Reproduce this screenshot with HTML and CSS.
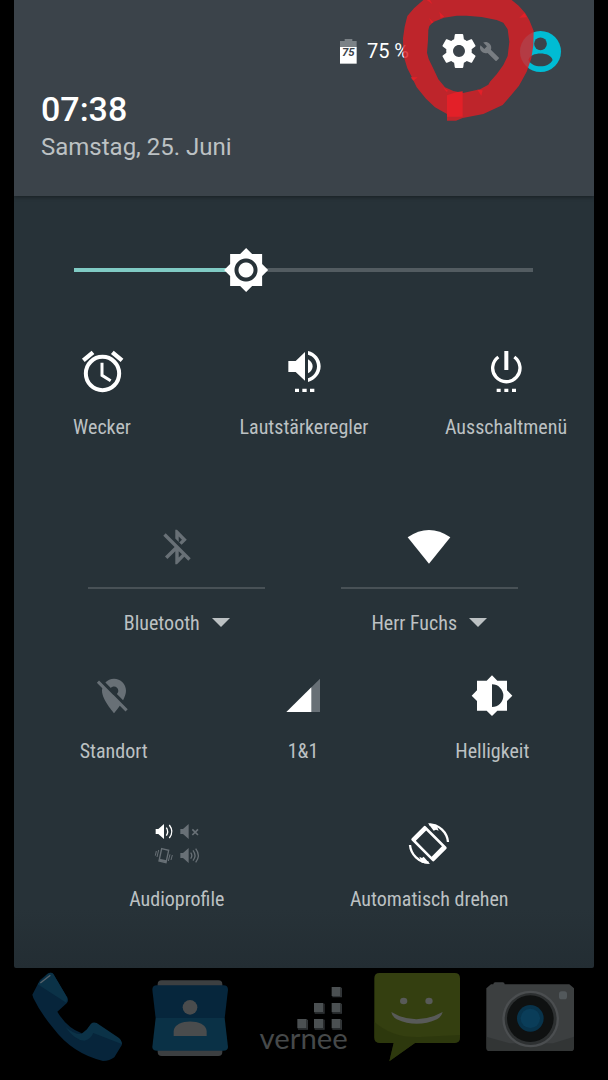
FILE: index.html
```html
<!DOCTYPE html>
<html lang="de">
<head>
<meta charset="utf-8">
<meta name="viewport" content="width=device-width, initial-scale=1">
<title>Schnelleinstellungen</title>
<link rel="stylesheet" href="styles.css">
</head>
<body>
<main class="panel">
  <header class="header">
    <div class="status">
      <svg class="battery" viewBox="60 114 51 75" aria-hidden="true">
        <path fill="#7b8287" d="M74 114h23v6h13v19H60v-19h14z"/>
        <path fill="#fff" d="M60 138h50v50H60z"/>
        <text class="battery-level" x="85" y="164" text-anchor="middle">75</text>
      </svg>
      <span class="percent">75 %</span>
      <button class="icon-button gear" type="button" aria-label="Einstellungen">
        <svg viewBox="2 2 20 20" fill="#fff"><path d="M19.43 12.98c.04-.32.07-.64.07-.98s-.03-.66-.07-.98l2.11-1.65c.19-.15.24-.42.12-.64l-2-3.46c-.12-.22-.39-.3-.61-.22l-2.49 1c-.52-.4-1.08-.73-1.69-.98l-.38-2.65C14.46 2.18 14.25 2 14 2h-4c-.25 0-.46.18-.49.42l-.38 2.65c-.61.25-1.17.59-1.69.98l-2.49-1c-.23-.09-.49 0-.61.22l-2 3.46c-.13.22-.07.49.12.64l2.11 1.65c-.04.32-.07.65-.07.98s.03.66.07.98l-2.11 1.65c-.19.15-.24.42-.12.64l2 3.46c.12.22.39.3.61.22l2.49-1c.52.4 1.08.73 1.69.98l.38 2.65c.03.24.24.42.49.42h4c.25 0 .46-.18.49-.42l.38-2.65c.61-.25 1.17-.59 1.69-.98l2.49 1c.23.09.49 0 .61-.22l2-3.46c.12-.22.07-.49-.12-.64l-2.11-1.65zM12 15.5c-1.93 0-3.5-1.57-3.5-3.5s1.57-3.5 3.5-3.5 3.5 1.57 3.5 3.5-1.57 3.5-3.5 3.5z"/></svg>
      </button>
      <svg class="wrench" viewBox="1 1 22 22" fill="#787d82" aria-hidden="true"><path d="M22.7 19l-9.1-9.1c.9-2.3.4-5-1.5-6.9-2-2-5-2.4-7.4-1.3L9 6 6 9 1.6 4.7C.4 7.1.9 10.1 2.9 12.1c1.9 1.9 4.6 2.4 6.9 1.5l9.1 9.1c.4.4 1 .4 1.4 0l2.3-2.3c.5-.4.5-1.1.1-1.4z"/></svg>
      <button class="icon-button user" type="button" aria-label="Nutzer">
        <svg viewBox="600 90 122 122"><circle cx="661" cy="151" r="61" fill="#00bcd4"/><circle cx="661" cy="128" r="19" fill="#3b434a"/><path fill="#3b434a" d="M625 176c4-13 19-19 36-19s32 6 36 19c-6 12-20 19-36 19s-30-7-36-19z"/></svg>
      </button>
    </div>
    <div class="time">07:38</div>
    <div class="date">Samstag, 25. Juni</div>
    <svg class="marker" viewBox="240 0 411 366" aria-hidden="true">
      <path fill="#dc1e25" fill-opacity=".82" fill-rule="evenodd" d="M310 0 282 25 262 48 254 80 249 115 250 165 262 205 275 230 290 262 318 296 345 322 381 342V362H408L428 354 490 342 548 315 572 287 597 257 620 215 634 175 640 135 641 93 628 61 616 40 596 17 575 0ZM325 90 328 78 340 66 372 53 410 47 440 47 485 51 530 60 550 68 563 88 568 125 563 168 550 195 530 223 510 245 505 254 480 268 456 273 429 279 400 273 375 262 355 238 342 210 326 177 321 158 324 120Z"/>
      <path fill="#e32028" d="M381 286 408 277 428 274V350H381ZM320 0h10l7 12zM358 36l15 14-11 4zM327 54l14 13-7 3zM598 53l15-14 8 13zM272 232l21 0-13 10zM369 262l16 11-6 2zM472 269l16 2-4 16z"/>
    </svg>
  </header>

  <input class="slider" type="range" min="0" max="1000" value="375" aria-label="Displayhelligkeit">

  <div class="actions">
    <button class="tile" type="button">
      <svg class="icon" viewBox="54 54 144 144" fill="none" stroke="#fff"><circle cx="127.500" cy="130.500" r="50" stroke-width="12"/><path stroke-width="9" d="M126 98v38l26 16"/><path stroke-width="13" d="M70 91l29-24M157 67l29 24"/></svg>
      <span class="label">Wecker</span>
    </button>
    <button class="tile" type="button">
      <svg class="icon" viewBox="660 54 144 144" fill="#fff"><path d="M685 93h22l28-27v86l-28-26h-22zM744 88c9 5 14 13 14 21s-5 17-14 21zM744 63c22 5 38 24 38 46s-16 41-38 47v-11c16-5 27-19 27-36s-11-31-27-35zM705 176h12v10h-12zM727 176h13v10h-13zM750 176h13v10h-13z"/></svg>
      <span class="label">Lautstärkeregler</span>
    </button>
    <button class="tile" type="button">
      <svg class="icon" viewBox="486 54 144 144"><path fill="none" stroke="#fff" stroke-width="10" d="M535 81a41 41 0 1 0 48 0"/><path fill="#fff" d="M553 63h12v57h-12zM530 176h12v10h-12zM553 176h12v10h-12zM576 176h12v10h-12z"/></svg>
      <span class="label">Ausschaltmenü</span>
    </button>
  </div>

  <div class="tiles">
    <div class="row row-dual">
      <div class="dual">
        <button class="dual-icon" type="button" aria-label="Bluetooth umschalten">
          <svg class="icon" viewBox="-2 -2 28 28" fill="#687076"><path d="M13 5.830l1.880 1.880-1.600 1.600 1.410 1.410 3.020-3.020L12 2h-1v5.030l2 2v-3.200zM5.410 4L4 5.410 10.590 12 5 17.590 6.410 19 11 14.410V22h1l4.290-4.290 2.300 2.290L20 18.590 5.410 4zM13 18.170v-3.760l1.880 1.880L13 18.170z"/></svg>
        </button>
        <button class="dual-label" type="button">Bluetooth<svg class="caret" viewBox="0 0 18 10"><path fill="#bcc1c3" d="M0 0h18L9 9z"/></svg></button>
      </div>
      <div class="dual">
        <button class="dual-icon" type="button" aria-label="WLAN umschalten">
          <svg class="icon" viewBox="255 69 144 144" fill="#fff"><path d="M327 191 263 112Q327 68 391 112Z"/></svg>
        </button>
        <button class="dual-label" type="button">Herr Fuchs<svg class="caret" viewBox="0 0 18 10"><path fill="#bcc1c3" d="M0 0h18L9 9z"/></svg></button>
      </div>
    </div>
    <div class="row row-three">
      <button class="tile" type="button">
        <svg class="icon" viewBox="-2 -2 28 28" fill="#687076"><path d="M12 6.500c1.380 0 2.500 1.120 2.500 2.500 0 .740-.330 1.390-.830 1.850l3.630 3.630c.980-1.860 1.700-3.800 1.700-5.480 0-3.870-3.130-7-7-7-1.980 0-3.760.830-5.040 2.150l3.190 3.190c.460-.520 1.110-.840 1.850-.840zm4.370 9.600l-4.630-4.630-.110-.110L3.270 3 2 4.270l3.180 3.180C5.070 7.950 5 8.470 5 9c0 5.250 7 13 7 13s1.670-1.850 3.380-4.350L18.730 21 20 19.730l-3.630-3.630z"/></svg>
        <span class="label">Standort</span>
      </button>
      <button class="tile" type="button">
        <svg class="icon" viewBox="655 36 144 144"><path fill="#687076" d="M778 56v100h-28V84z"/><path fill="#fff" d="M677 156h75V82z"/></svg>
        <span class="label">1&amp;1</span>
      </button>
      <button class="tile" type="button">
        <svg class="icon" viewBox="204 36 144 144" fill="#fff"><path fill-rule="evenodd" d="M276 46l16 16h29v29l16 16-16 16v29h-29l-16 16-16-16h-29v-29l-16-16 16-16V62h29zM276 73v68a34 34 0 0 0 0-68z"/></svg>
        <span class="label">Helligkeit</span>
      </button>
    </div>
    <div class="row row-two">
      <button class="tile" type="button">
        <svg class="icon" viewBox="128 60 144 144" fill="none">
          <g stroke-width="4" stroke="#fff"><path fill="#fff" stroke="none" d="M136 87h8l17-15v45l-17-15h-8z"/><path d="M168 83q8 12 0 24M177 75q15 20 0 39"/></g>
          <g stroke="#687076" stroke-width="4"><path fill="#687076" stroke="none" d="M210 87h8l17-15v45l-17-15h-8zM210 159h8l17-15v45l-17-15h-8z"/><path d="M246 88l17 17M263 88l-17 17" stroke-width="5"/><path d="M241 158q7 9 0 18M248 151q12 16 0 31M256 146q16 21 0 41"/><path d="M154 146l21 5-8 37-21-5z"/><path d="M147 179l21 5" stroke-width="6"/><path d="M145 150l-5 21M138 153l-3 14M179 163l-5 20M186 165l-4 15" stroke-width="3"/></g>
        </svg>
        <span class="label">Audioprofile</span>
      </button>
      <button class="tile" type="button">
        <svg class="icon" viewBox="885 60 144 144"><g transform="rotate(45 957 131)"><path fill="#fff" fill-rule="evenodd" d="M914 101h86q5 0 5 5v50q0 5-5 5h-86q-5 0-5-5v-50q0-5 5-5zM923 109v44h67v-44z"/></g><path fill="none" stroke="#fff" stroke-width="7" d="M958 73a58 58 0 0 1 56 53M956 188a58 58 0 0 1-56-53"/><path fill="#fff" d="M954 70l25 4 7 18-8-3-7 3zM960 192l-25-4-7-18 8 4 5-4z"/></svg>
        <span class="label">Automatisch drehen</span>
      </button>
    </div>
  </div>
</main>

<nav class="dock" aria-label="Favoriten">
  <a class="app" href="#telefon" aria-label="Telefon">
    <svg viewBox="96 66 270 270"><path fill="#07253b" d="M97 134 120 90 142 72q11-7 18 0l42 71q5 9-2 17l-28 25q28 48 73 65 12-2 18-14l9-12q7-7 18-3l67 45q12 9 8 20l-22 36q-14 11-34 11-92-22-149-98-39-47-60-91z"/><path fill="#0b3247" d="M113 103 142 72q11-7 18 0l42 71-3 15zM261 238l12-17q7-6 17-2l67 45q10 8 8 18l-85-33q-9 20-27 23-29-2-57-42 27 24 48 22z"/><path stroke="#5a646b" stroke-width="4" d="M121 99l30-23"/></svg>
  </a>
  <a class="app" href="#kontakte" aria-label="Kontakte">
    <svg viewBox="436 66 270 270"><rect x="474" y="91" width="194" height="227" rx="12" fill="#3c3f41"/><path fill="#06263c" d="M472 106h199q14 0 14 13l-10 86H468l-10-86q0-13 14-13z"/><path fill="#0a3146" d="M468 204h207l10 87q0 11-14 11H472q-14 0-14-11z"/><circle cx="571" cy="172" r="22" fill="#4a4c4d"/><path fill="#4a4c4d" d="M522 258v-15c3-38 96-38 99 0v15z"/></svg>
  </a>
  <a class="app" href="#vernee" aria-label="vernee">
    <svg viewBox="777 66 270 270"><path fill="#4b5052" d="M995 111h27v27h-27zM942 159h28v28h-28zM995 159h27v28h-27zM892 207h28v28h-28zM942 207h28v28h-28zM995 207h27v28h-27z"/><path fill="none" stroke="#303437" stroke-width="4" d="M997 140h27v-27M944 189h28v-28M997 189h27v-28M894 237h28v-28M944 237h28v-28M997 237h27v-28"/><text class="brand" x="911" y="298" text-anchor="middle">vernee</text></svg>
  </a>
  <a class="app" href="#nachrichten" aria-label="Nachrichten">
    <svg viewBox="206 66 270 270"><path fill="#343f10" d="M226 69h225q16 0 16 16v177q0 17-16 17H332l-77 55 13-55h-42q-16 0-16-17V85q0-16 16-16z"/><path fill="#29330b" d="M210 215q58 53 150 45l107-5v7q0 17-16 17H332l-77 55 13-55h-42q-16 0-16-17z" opacity=".6"/><ellipse cx="298" cy="153" rx="11" ry="10" fill="#585a58"/><ellipse cx="374" cy="153" rx="11" ry="10" fill="#585a58"/><path fill="#585a58" d="M261 186q73 44 154 0-3 14-17 22-61 27-121 0-14-8-16-22z"/></svg>
  </a>
  <a class="app" href="#kamera" aria-label="Kamera">
    <svg viewBox="545 66 270 270"><rect x="567" y="97" width="34" height="14" rx="6" fill="#3d4042"/><path fill="#3c3f40" d="M560 103h235l14 12v178q0 10-10 10H556q-10 0-10-10V115z"/><path fill="#2c2e2f" d="M546 260l70 20h130l63-20v33q0 10-10 10H556q-10 0-10-10z" opacity=".6"/><circle cx="679" cy="207" r="85" fill="#4b4e50"/><circle cx="679" cy="207" r="78" fill="#2d3031"/><circle cx="678" cy="206" r="70" fill="#0f1111"/><circle cx="678" cy="205" r="40" fill="#08334b"/><circle cx="678" cy="205" r="29" fill="#0a3d59"/><rect x="764" y="124" width="24" height="24" rx="8" fill="#52585b"/></svg>
  </a>
</nav>
</body>
</html>
```
FILE: styles.css
```css
* {
  box-sizing: border-box;
}

body {
  margin: 0;
  min-height: 100vh;
  background: #000;
  color: #bcc1c3;
  font-family: Roboto, "Noto Sans", sans-serif;
}

button {
  padding: 0;
  border: 0;
  background: none;
  color: inherit;
  font: inherit;
}

svg {
  display: block;
  overflow: visible;
}

.panel {
  margin: 0 14px;
  padding-bottom: 57px;
  border-radius: 0 0 2px 2px;
  background: linear-gradient(#273238 94%, #232d33);
}

.header {
  position: relative;
  padding: 31px 33px 31px 27px;
  background: #3b434a;
  box-shadow: 0 1px 4px rgba(0, 0, 0, 0.4);
}

.status {
  display: flex;
  align-items: center;
  justify-content: flex-end;
  height: 40px;
  margin-bottom: 18px;
}

.battery {
  width: 17px;
  height: 25px;
  margin-right: 10px;
}

.battery-level {
  fill: #3b434a;
  font-size: 34px;
  font-style: italic;
  font-weight: 700;
}

.percent {
  margin-right: 33px;
  color: #fff;
  font-size: 20px;
}

.gear {
  width: 34px;
  margin-right: 4px;
}

.wrench {
  width: 19px;
  height: 19px;
  margin-right: 21px;
}

.user {
  width: 41px;
}

.time {
  color: #fff;
  font-size: 34px;
  font-weight: 500;
  line-height: 40px;
}

.date {
  font-size: 24px;
  line-height: 36px;
}

.marker {
  position: absolute;
  top: 0;
  right: 57px;
  width: 137px;
  pointer-events: none;
}

.slider {
  display: block;
  width: calc(100% - 77px);
  height: 44px;
  margin: 52px 39px 56px 38px;
  appearance: none;
  background: linear-gradient(90deg, transparent 22px, #80cbc4 22px, #80cbc4 38%, #535c61 38%, #535c61 calc(100% - 22px), transparent calc(100% - 22px)) center / 100% 4px no-repeat;
}

.slider::-webkit-slider-thumb {
  appearance: none;
  width: 44px;
  height: 44px;
  background: radial-gradient(circle, #fff 7px, #273238 8px, #273238 11px, #fff 12px);
  clip-path: polygon(22px 0, 28px 6px, 38px 6px, 38px 16px, 44px 22px, 38px 28px, 38px 38px, 28px 38px, 22px 44px, 16px 38px, 6px 38px, 6px 28px, 0 22px, 6px 16px, 6px 6px, 16px 6px);
}

.actions {
  display: grid;
  grid-template-columns: repeat(3, 1fr);
  gap: 66px;
  padding: 0 20px;
  margin-bottom: 84px;
}

.tile {
  display: flex;
  flex-direction: column;
  align-items: center;
  gap: 19px;
}

.icon {
  width: 48px;
  height: 48px;
}

.label,
.dual-label {
  font-family: "Roboto Condensed", "Liberation Sans Narrow", Roboto, sans-serif;
  font-size: 20px;
  line-height: 24px;
  white-space: nowrap;
}

.tiles {
  padding: 0 7px 0 5px;
}

.row {
  display: flex;
  justify-content: space-evenly;
}

.row .tile,
.dual {
  width: 33.33%;
}

.row-dual {
  margin-bottom: 37px;
}

.row-three {
  margin-bottom: 57px;
}

.dual {
  display: flex;
  flex-direction: column;
  padding: 0 6px;
}

.dual-icon {
  display: flex;
  justify-content: center;
  padding-bottom: 16px;
  border-bottom: 2px solid #485156;
}

.dual-label {
  display: flex;
  align-items: center;
  justify-content: center;
  gap: 12px;
  padding-top: 22px;
}

.caret {
  width: 18px;
  height: 10px;
}

.dock {
  display: grid;
  grid-template-columns: repeat(5, 1fr);
  padding: 4px 20px 18px;
}

.app {
  justify-self: center;
  width: 90px;
}

.brand {
  fill: #46494a;
  font-family: Lato, sans-serif;
  font-size: 88px;
}
```
